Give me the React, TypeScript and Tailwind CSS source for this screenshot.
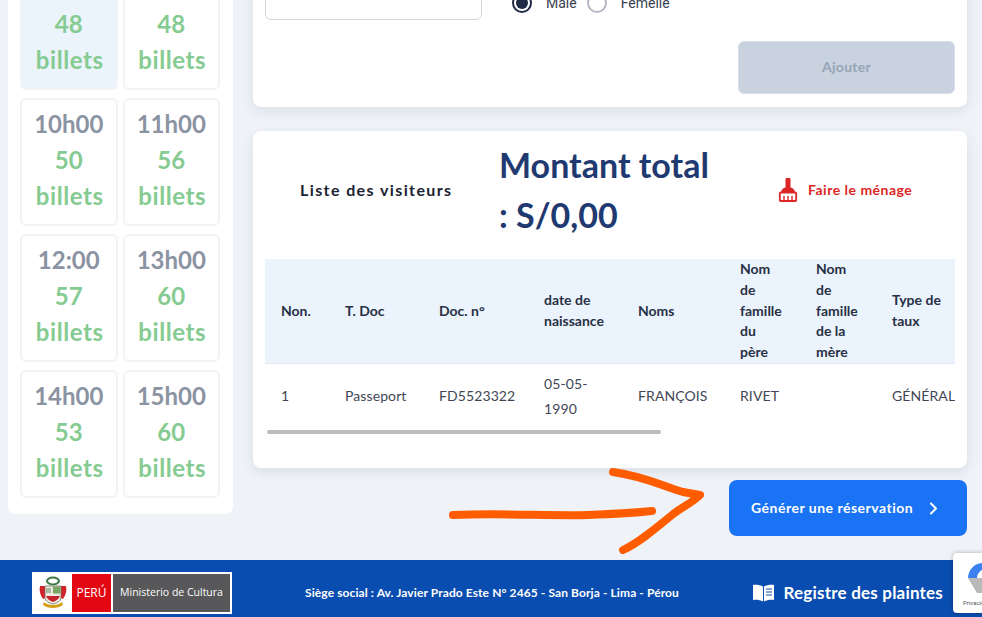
const sessions = [
  { hour: "08h00", tickets: 48, active: true },
  { hour: "09h00", tickets: 48, active: false },
  { hour: "10h00", tickets: 50, active: false },
  { hour: "11h00", tickets: 56, active: false },
  { hour: "12:00", tickets: 57, active: false },
  { hour: "13h00", tickets: 60, active: false },
  { hour: "14h00", tickets: 53, active: false },
  { hour: "15h00", tickets: 60, active: false },
];

const columns = [
  { label: "Non.", width: "w-[64px]" },
  { label: "T. Doc", width: "w-[94px]" },
  { label: "Doc. n°", width: "w-[105px]" },
  { label: "date de naissance", width: "w-[94px]" },
  { label: "Noms", width: "w-[102px]" },
  { label: "Nom de famille du père", width: "w-[76px]" },
  { label: "Nom de famille de la mère", width: "w-[76px]" },
  { label: "Type de taux", width: "w-[100px]" },
];

const row = ["1", "Passeport", "FD5523322", "05-05-1990", "FRANÇOIS", "RIVET", "", "GÉNÉRAL"];

function Broom() {
  return (
    <svg width="20" height="24" viewBox="0 0 20 24" className="shrink-0">
      <rect x="7.5" y="0" width="5" height="10" rx="1" fill="#dc2626" />
      <path d="M3 15c0-3 2-5.5 5-5.5h4c3 0 5 2.500 5 5.500z" fill="#dc2626" />
      <rect x="1.800" y="14.500" width="16.400" height="8.500" rx="1" fill="#fff" stroke="#dc2626" strokeWidth="1.800" />
      <path d="M6 18v4M10 18v4M14 18v4" stroke="#dc2626" strokeWidth="1.400" />
    </svg>
  );
}

function Crest() {
  return (
    <svg width="28" height="34" viewBox="0 0 28 34">
      <ellipse cx="14" cy="5" rx="6" ry="3.500" fill="none" stroke="#3c7a45" strokeWidth="2" />
      <path d="M1 10c-1 4 0 9 3 13l2-1V10z" fill="#d2232a" />
      <path d="M27 10c1 4 0 9-3 13l-2-1V10z" fill="#d2232a" />
      <path d="M6 10h16v12c0 3-4 5-8 6-4-1-8-3-8-6z" fill="#eeeae0" stroke="#6f6f60" strokeWidth="0.800" />
      <rect x="14" y="10.500" width="7.500" height="7" fill="#79a566" />
      <rect x="7" y="12" width="5" height="5" fill="#a8b8a0" />
      <path d="M7 20h14c-1 3-4 5-7 6-3-1-6-3-7-6z" fill="#c8232c" />
      <path d="M5 26c4 4 14 4 18 0l1 3c-5 4-15 4-20 0z" fill="#d4a017" />
    </svg>
  );
}

function App() {
  return (
    <div className="h-[617px] overflow-hidden flex flex-col bg-[#eff3f8] font-['Lato',sans-serif] relative">
      <div className="flex-1 min-h-0 flex items-start gap-5 ml-2 mr-[15px] mt-[-50px]">
        <aside className="w-[225px] shrink-0 bg-white rounded-lg pl-3 pr-[13px] pt-3 pb-4">
          <div className="grid grid-cols-2 gap-x-[5px] gap-y-2">
            {sessions.map((s) => (
              <div
                key={s.hour}
                className={`h-[128px] rounded-md border-2 border-[#f1f3f6] pt-[6px] text-center text-2xl leading-9 font-bold ${
                  s.active ? "bg-[#ebf3fb]" : "bg-white"
                }`}
              >
                <div className="text-[#8b93a3]">{s.hour}</div>
                <div className="text-[#86cb92]">{s.tickets}</div>
                <div className="text-[#86cb92] tracking-[0.6px] pl-0.5">billets</div>
              </div>
            ))}
          </div>
        </aside>

        <main className="flex-1 min-w-0 flex flex-col">
          <section className="bg-white rounded-lg shadow-[0_4px_12px_rgba(30,50,80,0.1)] px-3 pt-[18px] pb-[13px]">
            <div className="flex">
              <div className="w-[217px] h-[52px] border border-[#d3d6df] rounded-md bg-white" />
              <div className="flex items-end ml-[30px] h-[52px] pb-[7px] text-sm text-[#374151] font-['Roboto',sans-serif]">
                <span className="w-5 h-5 rounded-full border-2 border-[#1f2a44] flex items-center justify-center">
                  <span className="w-3 h-3 rounded-full bg-[#1f2a44]" />
                </span>
                <span className="ml-[14px] mr-[10px] leading-5">Male</span>
                <span className="w-5 h-5 rounded-full border-2 border-[#b4b8c4]" />
                <span className="ml-[14px] leading-5">Femelle</span>
              </div>
            </div>
            <div className="flex justify-end mt-[21px]">
              <button className="w-[217px] h-[53px] pb-0.5 rounded-md bg-[#c9d3e0] border border-[#d8dfe9] text-sm tracking-[0.3px] font-bold text-[#97a3b6]">
                Ajouter
              </button>
            </div>
          </section>

          <section className="mt-6 h-[337px] bg-white rounded-lg shadow-[0_4px_12px_rgba(30,50,80,0.1)] px-3">
            <div className="h-[128px] pb-[10px] flex items-center">
              <h3 className="w-[234px] pl-[35px] text-base tracking-[1.4px] font-bold text-[#1b2233]">
                Liste des visiteurs
              </h3>
              <h2 className="w-[279px] pr-[62px] text-[34px] leading-[50px] font-bold text-[#1f3a70]">
                Montant total : S/0,00
              </h2>
              <button className="flex items-center gap-[10px] text-sm tracking-[0.5px] font-bold text-[#dc2626] whitespace-nowrap">
                <Broom />
                Faire le ménage
              </button>
            </div>

            <div className="overflow-hidden">
              <table className="table-fixed w-[711px] border-collapse text-sm text-left">
                <thead>
                  <tr className="bg-[#ebf3fd] border-b border-[#e3e8f0]">
                    {columns.map((c) => (
                      <th key={c.label} className={`${c.width} pl-4 pr-4 py-0 font-bold leading-[20.8px] text-[#283044] align-middle`}>
                        {c.label}
                      </th>
                    ))}
                  </tr>
                </thead>
                <tbody>
                  <tr>
                    {row.map((cell, i) => (
                      <td key={i} className="pl-4 pr-4 pb-[3px] h-[67px] leading-[25px] text-[#3f4656] tracking-[0.1px]">
                        {cell}
                      </td>
                    ))}
                  </tr>
                </tbody>
              </table>
            </div>
            <div className="ml-0.5 w-[394px] h-1 rounded-sm bg-[#bcbcbc]" />
          </section>

          <button className="self-end mt-3 w-[238px] h-14 rounded-lg bg-[#1a73f5] flex items-center pl-[22px] gap-4 text-sm tracking-[0.5px] font-bold text-white whitespace-nowrap">
            Générer une réservation
            <svg width="9" height="13" viewBox="0 0 9 13" fill="none" stroke="#fff" strokeWidth="2" strokeLinecap="round" strokeLinejoin="round">
              <path d="M2 1.500 7 6.500l-5 5" />
            </svg>
          </button>
        </main>
      </div>

      <footer className="h-[57px] shrink-0 bg-[#0a4db0] flex items-center pl-8 pr-[39px] pt-[9px] relative">
        <div className="w-[200px] h-[42px] flex items-center bg-white p-0.5 shrink-0">
          <div className="w-[38px] flex justify-center">
            <Crest />
          </div>
          <div className="w-[39px] h-full bg-[#e30613] flex items-center justify-center text-xs text-white font-['Open_Sans',sans-serif]">
            PERÚ
          </div>
          <div className="flex-1 h-full ml-0.5 bg-[#58585a] flex items-center justify-center text-[10.5px] whitespace-nowrap text-white font-['Open_Sans',sans-serif]">
            Ministerio de Cultura
          </div>
        </div>
        <p className="ml-[73px] text-xs tracking-[0.1px] font-bold text-white whitespace-nowrap">
          Siège social : Av. Javier Prado Este N° 2465 - San Borja - Lima - Pérou
        </p>
        <div className="ml-auto flex items-center gap-[9px] text-[17px] tracking-[0.2px] font-bold text-white">
          <svg width="23" height="18" viewBox="0 0 23 18">
            <path d="M11 2.500C8 .8 4 .5 1 1v15c3-.5 7-.2 10 1.500z" fill="#fff" />
            <path d="M12 2.500C15 .8 19 .5 22 1v15c-3-.5-7-.2-10 1.500z" fill="#fff" />
            <path d="M14 5h6M14 8h6M14 11h6" stroke="#0a4db0" strokeWidth="1.200" />
          </svg>
          Registre des plaintes
        </div>
      </footer>

      {/* recaptcha badge */}
      <div className="absolute left-[953px] top-[553px] w-[60px] h-[60px] bg-white rounded-sm shadow-[0_0_4px_rgba(0,0,0,0.3)] overflow-hidden">
        <svg width="32" height="34" viewBox="0 0 32 34" className="absolute left-[15px] top-[8px]">
          <path d="M0 17A15 15 0 0 1 15 2l3 6a9 9 0 0 0-9 9z" fill="#3b82f0" />
          <path d="M15 2a15 15 0 0 1 15 15H21a6 6 0 0 0-3-9z" fill="#3b82f0" />
          <path d="M0 17h30a15 15 0 0 1-15 15L9 32z" fill="#b9b9b9" />
        </svg>
        <span className="absolute left-2.5 top-[47px] text-[6px] leading-none text-[#555] font-['Roboto',sans-serif]">Privacidad</span>
      </div>

      {/* hand drawn arrow */}
      <svg className="absolute left-0 top-0 pointer-events-none" width="982" height="617" fill="none" stroke="#ff5c00" strokeWidth="8" strokeLinecap="round" strokeLinejoin="round">
        <path d="M453 515c50-2 95 1 135 0 25-1 45-2 64-4" />
        <path d="M613 472c30 4 50 14 70 20l17 3c-8 8-18 12-28 20-16 13-32 27-49 35" />
      </svg>
    </div>
  );
}

export default App;
